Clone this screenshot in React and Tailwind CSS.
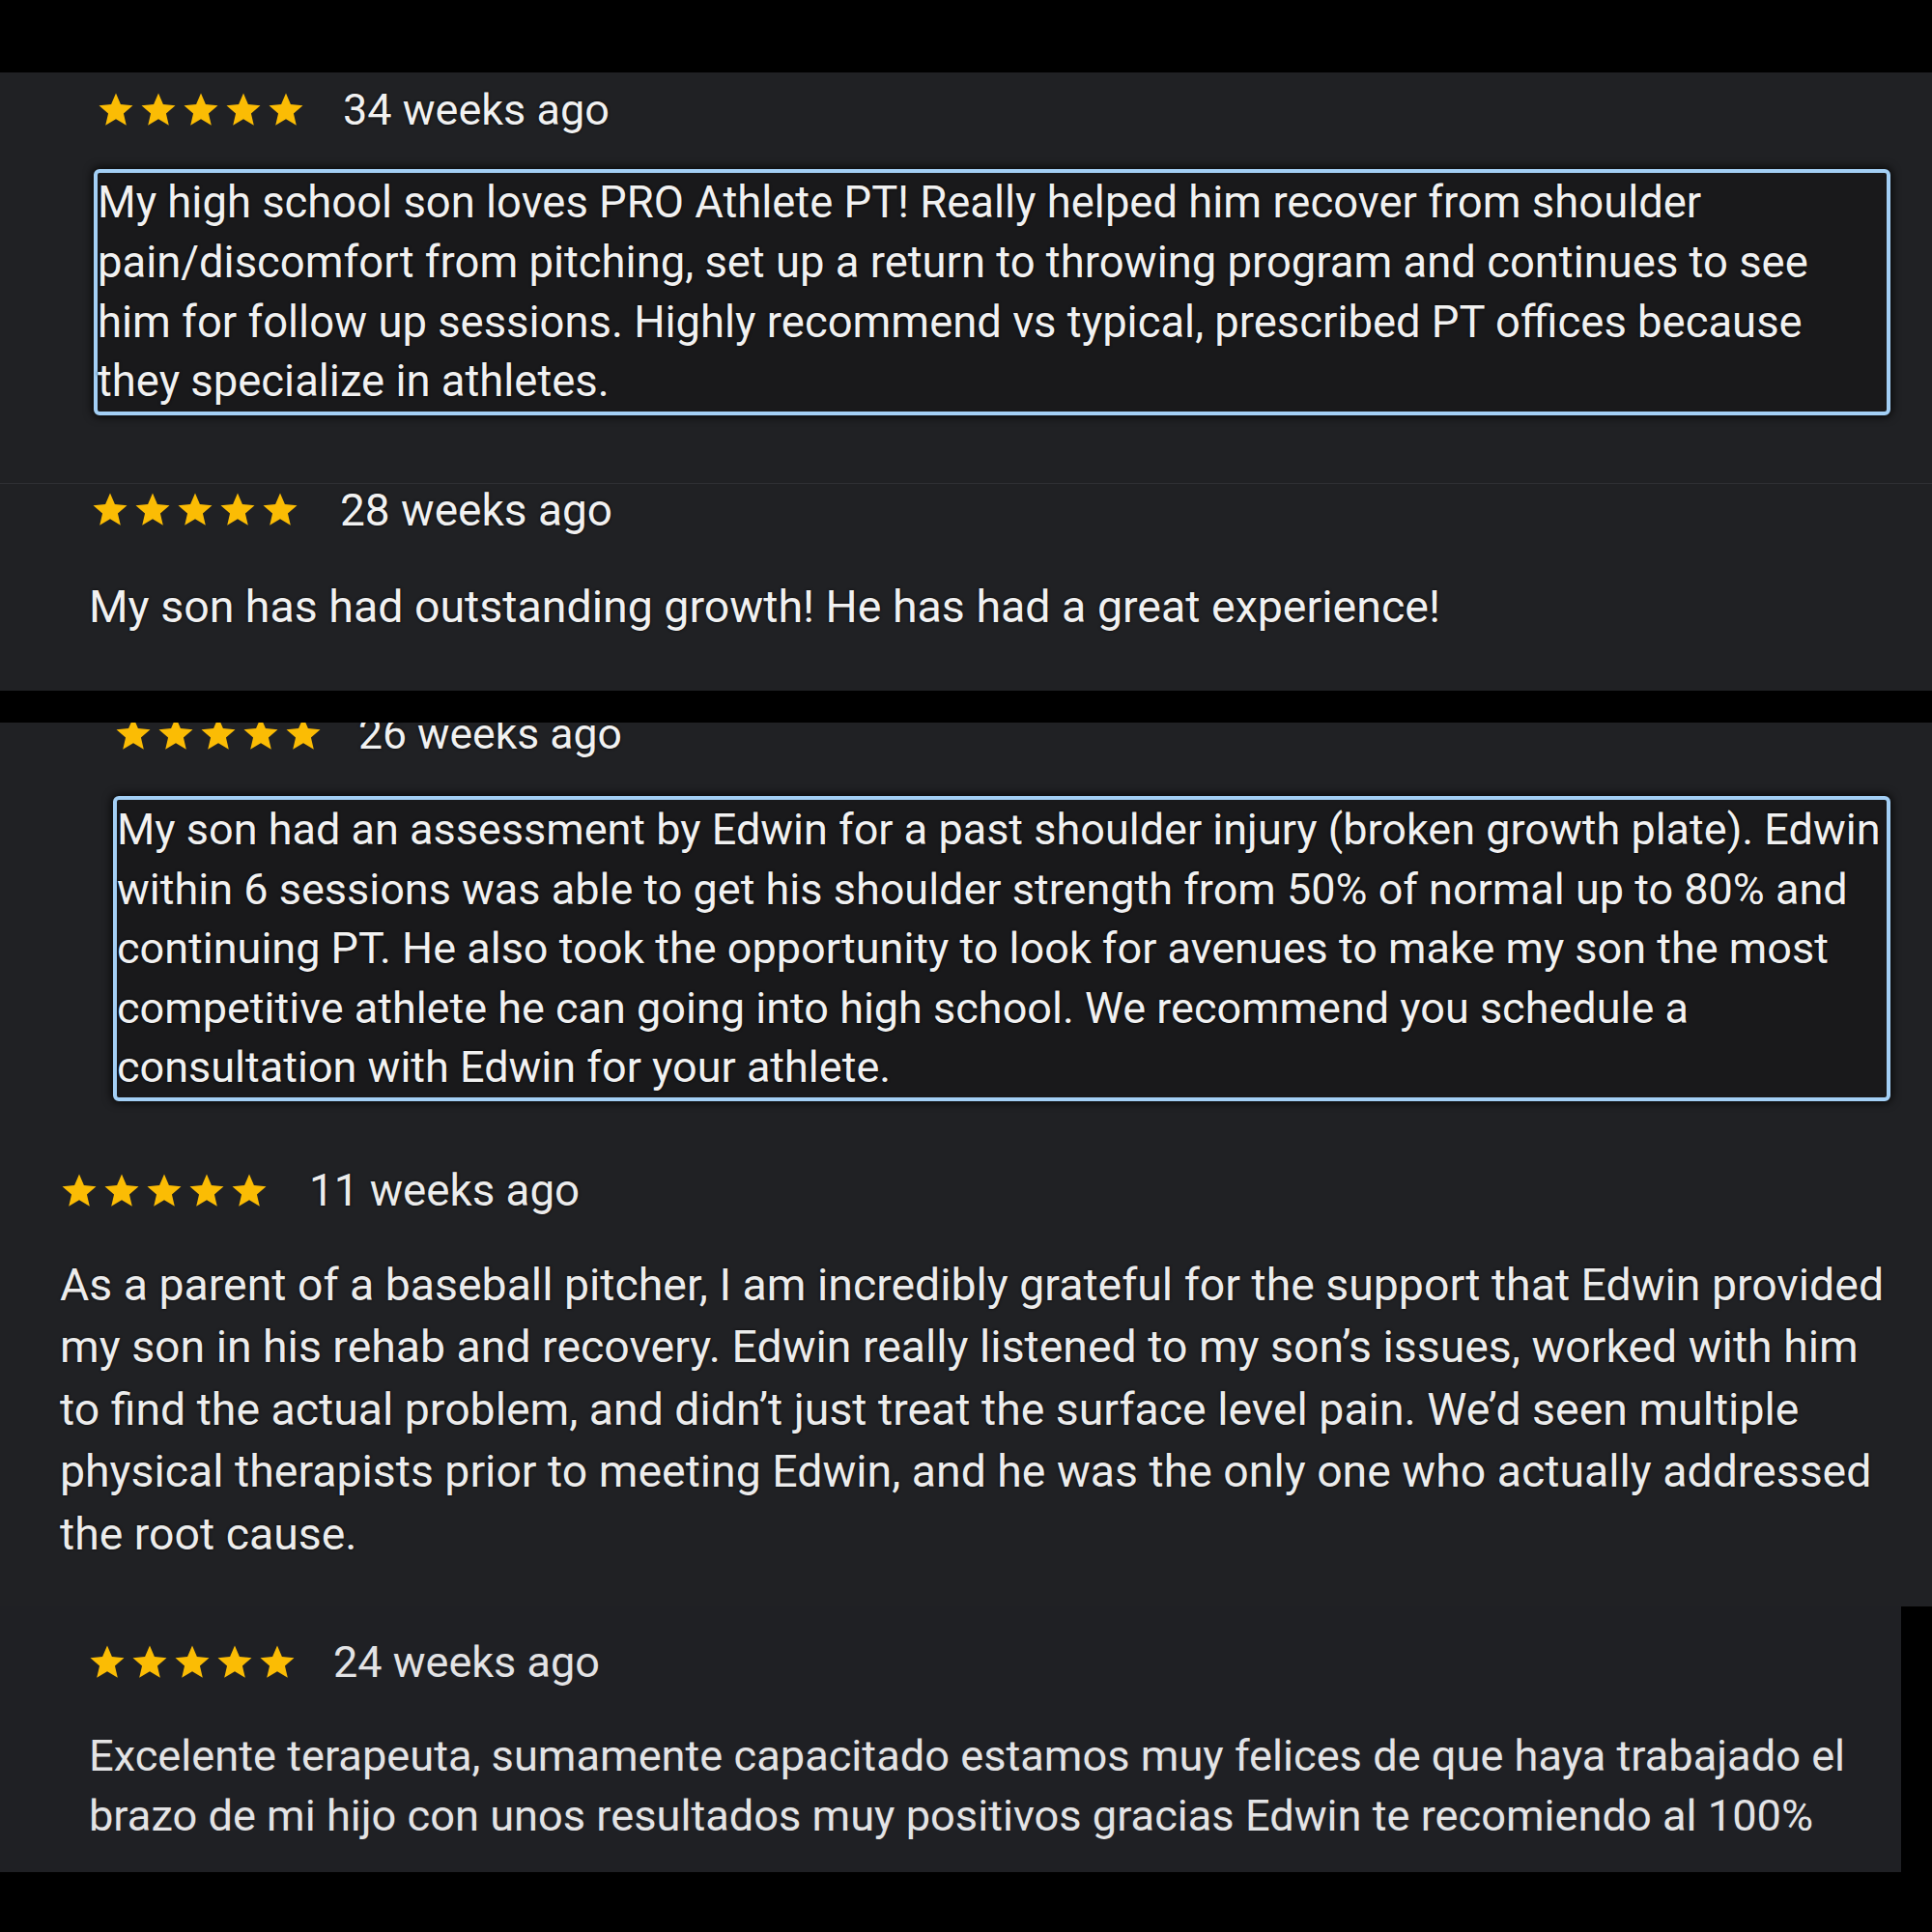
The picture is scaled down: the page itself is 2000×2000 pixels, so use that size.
import React from 'react';

const STAR = 'M12 17.27L18.18 21l-1.64-7.03L22 9.24l-7.19-.61L12 2 9.19 8.63 2 9.24l5.46 4.73L5.82 21z';

const Stars = () => (
  <div className="flex gap-[2px]">
    {[0, 1, 2, 3, 4].map((i) => (
      <svg key={i} viewBox="0 0 24 24" className="w-[42px] h-[42px] fill-[#fbbc04]">
        <path d={STAR} />
      </svg>
    ))}
  </div>
);

const Lines = ({ lines }) =>
  lines.map((line, i) => (
    <div key={i} className="whitespace-nowrap">{line}</div>
  ));

const first = [
  'My high school son loves PRO Athlete PT! Really helped him recover from shoulder',
  'pain/discomfort from pitching, set up a return to throwing program and continues to see',
  'him for follow up sessions. Highly recommend vs typical, prescribed PT offices because',
  'they specialize in athletes.',
];

const assessment = [
  'My son had an assessment by Edwin for a past shoulder injury (broken growth plate). Edwin',
  'within 6 sessions was able to get his shoulder strength from 50% of normal up to 80% and',
  'continuing PT. He also took the opportunity to look for avenues to make my son the most',
  'competitive athlete he can going into high school. We recommend you schedule a',
  'consultation with Edwin for your athlete.',
];

const parent = [
  'As a parent of a baseball pitcher, I am incredibly grateful for the support that Edwin provided',
  'my son in his rehab and recovery. Edwin really listened to my son’s issues, worked with him',
  'to find the actual problem, and didn’t just treat the surface level pain. We’d seen multiple',
  'physical therapists prior to meeting Edwin, and he was the only one who actually addressed',
  'the root cause.',
];

const spanish = [
  'Excelente terapeuta, sumamente capacitado estamos muy felices de que haya trabajado el',
  'brazo de mi hijo con unos resultados muy positivos gracias Edwin te recomiendo al 100%',
];

export default function App() {
  return (
    <div className="min-h-screen bg-black font-[Roboto,sans-serif] text-[#f1f1f1]">
      <div className="h-[75px]" />

      {/* 34 weeks */}
      <section className="h-[426px] bg-[#202124] border-b border-[#2e2f33] pt-[18px] [text-shadow:0_0_3px_rgba(0,0,0,0.9)]">
        <div className="ml-[99px] flex items-center h-[42px]">
          <Stars />
          <span className="ml-[38px] text-[45px] leading-10">34 weeks ago</span>
        </div>
        <div className="mt-[40px] ml-[97px] w-[1860px] border-4 border-[#a3cff5] rounded-md bg-[#19191b] shadow-[0_0_8px_2px_rgba(0,0,0,0.7)] text-[45.4px] leading-[61.75px]">
          <Lines lines={first} />
        </div>
      </section>

      {/* 28 weeks */}
      <section className="h-[214px] bg-[#202124] pt-[6px] [text-shadow:0_0_3px_rgba(0,0,0,0.9)]">
        <div className="ml-[93px] flex items-center h-[42px]">
          <Stars />
          <span className="ml-[41px] text-[46px] leading-10">28 weeks ago</span>
        </div>
        <p className="mt-[47px] ml-[92px] text-[46.5px] leading-[64px] whitespace-nowrap">
          My son has had outstanding growth! He has had a great experience!
        </p>
      </section>

      <div className="h-[33px]" />

      {/* 26 + 11 weeks */}
      <section className="h-[915px] bg-[#202124] overflow-hidden [text-shadow:0_0_3px_rgba(0,0,0,0.9)]">
        <div className="-mt-[9px] ml-[117px] flex items-center h-[42px]">
          <Stars />
          <span className="ml-[36px] text-[44.5px] leading-10">26 weeks ago</span>
        </div>
        <div className="mt-[43px] ml-[117px] w-[1840px] border-4 border-[#a3cff5] rounded-md bg-[#19191b] shadow-[0_0_8px_2px_rgba(0,0,0,0.7)] text-[45px] leading-[61.6px]">
          <Lines lines={assessment} />
        </div>

        <div className="mt-[72px] ml-[61px] flex items-center h-[42px]">
          <Stars />
          <span className="ml-[41px] text-[45.7px] leading-10 text-[#ececec]">11 weeks ago</span>
        </div>
        <div className="mt-[44px] ml-[62px] text-[46.4px] leading-[64.5px] text-[#ececec]">
          <Lines lines={parent} />
        </div>
      </section>

      {/* 24 weeks */}
      <section className="w-[1968px] h-[275px] bg-[#1f2024] pt-[37px] text-[#e3e3e5]">
        <div className="ml-[90px] flex items-center h-[42px]">
          <Stars />
          <span className="ml-[37px] text-[45px] leading-10">24 weeks ago</span>
        </div>
        <div className="mt-[45px] ml-[92px] text-[45.2px] leading-[62px]">
          <Lines lines={spanish} />
        </div>
      </section>
    </div>
  );
}
